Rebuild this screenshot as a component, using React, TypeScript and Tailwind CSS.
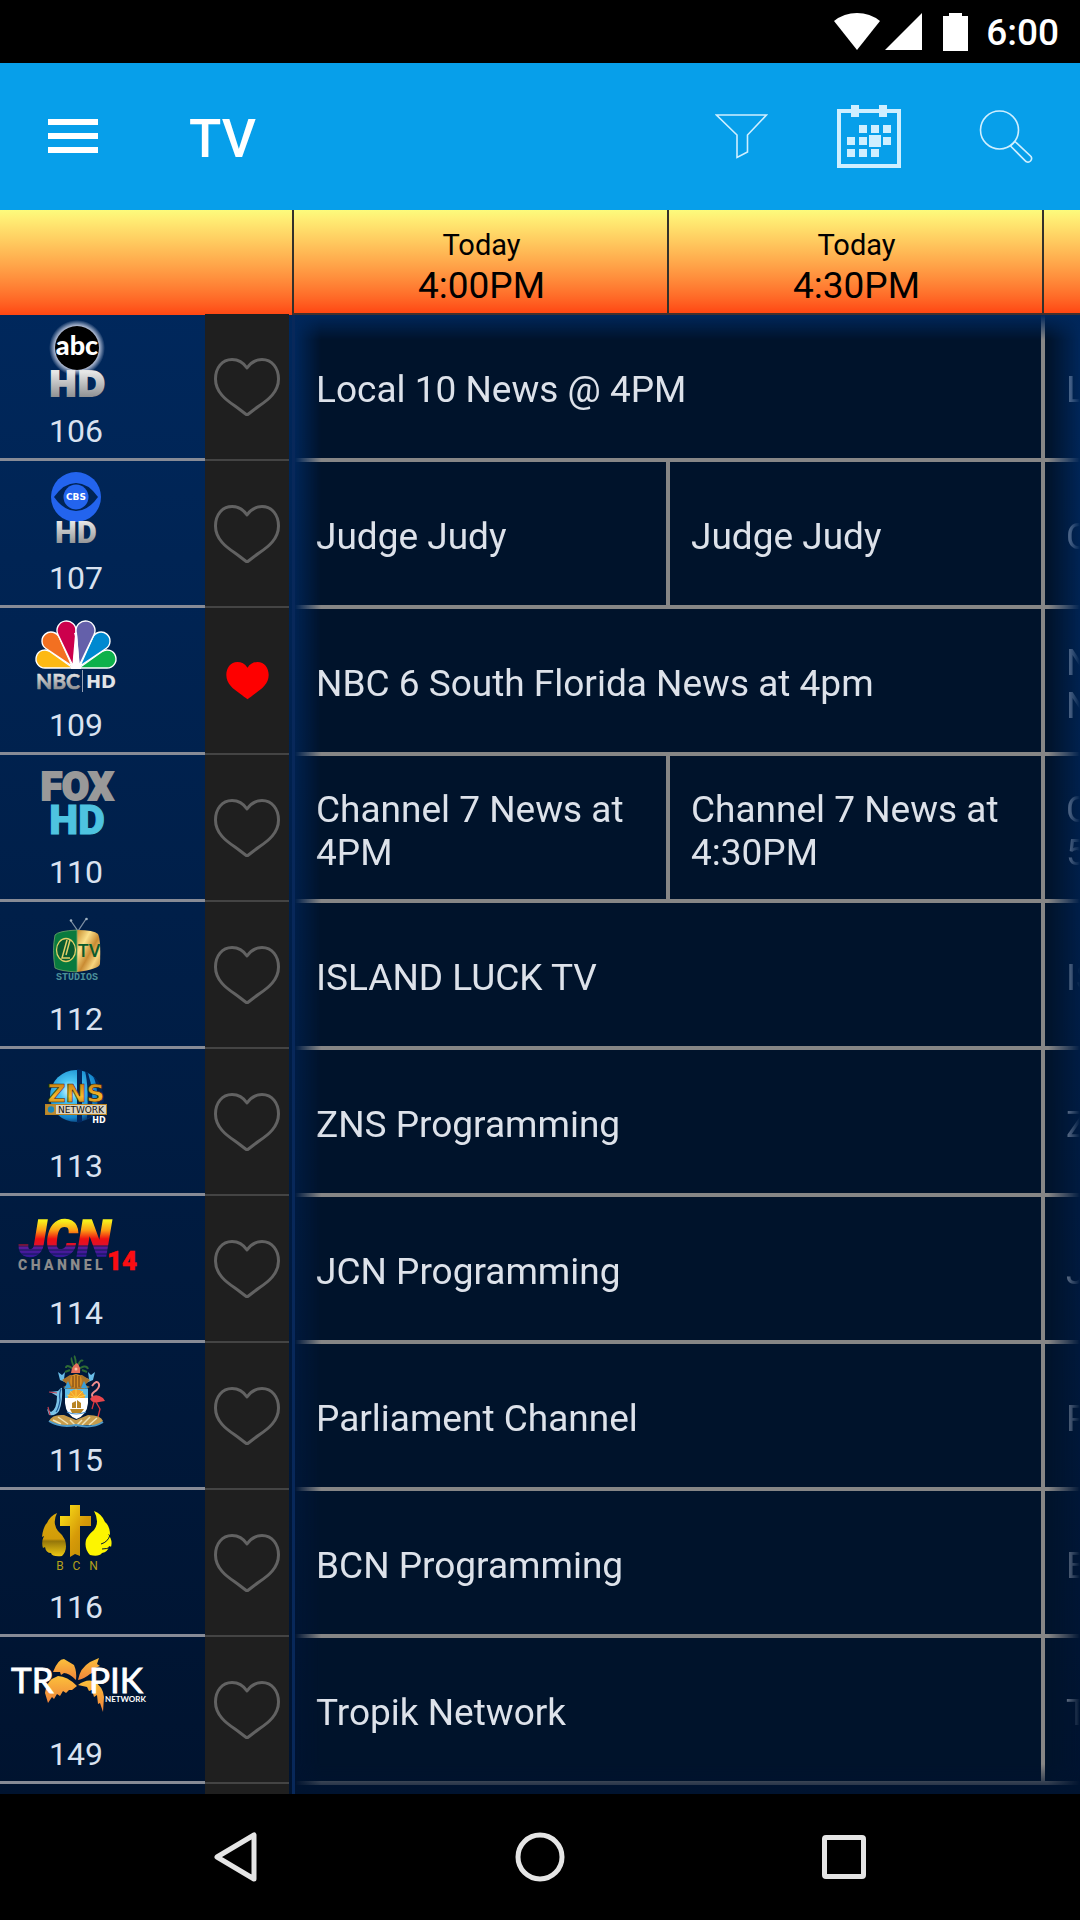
import { useState } from "react";
import type { ReactNode } from "react";

type Programme = { title: string; slots: 1 | 2 };
type Channel = {
  number: number;
  name: string;
  logo: ReactNode;
  favourite?: boolean;
  programmes: Programme[];
};

/* ---------- Channel logos, all on a 152 x 96 artboard ---------- */

function LogoBoard({ children }: { children: ReactNode }) {
  return (
    <svg viewBox="0 0 152 96" className="h-24 w-[152px]" aria-hidden="true">
      {children}
    </svg>
  );
}

function AbcLogo() {
  return (
    <LogoBoard>
      <defs>
        <linearGradient id="silver" x1="0" y1="0" x2="0" y2="1">
          <stop offset="0.2" stopColor="#e6e6e6" />
          <stop offset="1" stopColor="#77797c" />
        </linearGradient>
        <radialGradient id="halo">
          <stop offset="0.76" stopColor="#c8d0e4" />
          <stop offset="1" stopColor="#c8d0e4" stopOpacity="0" />
        </radialGradient>
      </defs>
      <circle cx="77" cy="34" r="28" fill="url(#halo)" />
      <circle cx="77" cy="34" r="22" fill="#000" />
      <text x="77" y="41" textAnchor="middle" fontFamily="Lato" fontWeight="900" fontSize="27" fill="#fff">abc</text>
      <text x="77" y="82" textAnchor="middle" fontFamily="DejaVu Sans" fontWeight="700" fontSize="34" fill="url(#silver)" stroke="url(#silver)" strokeWidth="2">HD</text>
    </LogoBoard>
  );
}

function CbsLogo() {
  return (
    <LogoBoard>
      <circle cx="76" cy="36" r="25" fill="#2364ee" />
      <path d="M54 36Q64 22 76 22Q88 22 98 36Q88 50 76 50Q64 50 54 36Z" fill="#002456" />
      <circle cx="76" cy="36" r="12.5" fill="#2364ee" />
      <text x="76" y="39" textAnchor="middle" fontFamily="DejaVu Sans" fontWeight="700" fontSize="9" fill="#fff">CBS</text>
      <text x="76" y="82" textAnchor="middle" fontFamily="Roboto" fontWeight="900" fontSize="31" fill="url(#silver)">HD</text>
    </LogoBoard>
  );
}

const feathers = [
  { bx: 73, by: 60, cx: 45, cy: 51, r: 9, color: "#fdb913" },
  { bx: 79, by: 60, cx: 107, cy: 51, r: 9, color: "#0db14b" },
  { bx: 72, by: 58, cx: 51, cy: 33, r: 9, color: "#f37021" },
  { bx: 80, by: 58, cx: 101, cy: 33, r: 9, color: "#0089d0" },
  { bx: 73, by: 58, cx: 66.5, cy: 22.5, r: 9.5, color: "#cc004c" },
  { bx: 79, by: 58, cx: 85.5, cy: 22.5, r: 9.5, color: "#6460aa" },
];

function featherPath(bx: number, by: number, cx: number, cy: number, r: number) {
  const distance = Math.hypot(bx - cx, by - cy);
  const toBase = Math.atan2(by - cy, bx - cx);
  const spread = Math.acos(r / distance);
  const x1 = cx + r * Math.cos(toBase + spread);
  const y1 = cy + r * Math.sin(toBase + spread);
  const x2 = cx + r * Math.cos(toBase - spread);
  const y2 = cy + r * Math.sin(toBase - spread);
  return `M${bx} ${by}L${x1} ${y1}A${r} ${r} 0 1 1 ${x2} ${y2}Z`;
}

function NbcLogo() {
  return (
    <LogoBoard>
      <path d="M71 61L76 24L81 61Z" fill="#fff" />
      {feathers.map((f) => (
        <path key={f.color} d={featherPath(f.bx, f.by, f.cx, f.cy, f.r)} fill={f.color} stroke="#fff" strokeWidth="1.4" strokeLinejoin="round" />
      ))}
      <path d="M72.5 61L75.5 30L74 25L77 24.5L80 61Z" fill="#fff" />
      <text x="36" y="81" fontFamily="Lato" fontWeight="700" fontSize="21" fill="url(#silver)" stroke="url(#silver)" strokeWidth="0.6">NBC</text>
      <path d="M82.5 62V84" stroke="#9aa3b5" strokeWidth="1" />
      <text x="86" y="80" fontFamily="DejaVu Sans" fontWeight="700" fontSize="18" fill="#e2e4e8">HD</text>
    </LogoBoard>
  );
}

function FoxLogo() {
  return (
    <LogoBoard>
      <text x="77" y="45" textAnchor="middle" fontFamily="Roboto" fontWeight="900" fontSize="39" fill="#999" stroke="#999" strokeWidth="2">FOX</text>
      <text x="77" y="79" textAnchor="middle" fontFamily="Roboto" fontWeight="900" fontSize="41" fill="#4ec3e0" stroke="#4ec3e0" strokeWidth="1">HD</text>
    </LogoBoard>
  );
}

function IslandLuckLogo() {
  return (
    <LogoBoard>
      <defs>
        <linearGradient id="gold" x1="0" y1="0" x2="1" y2="1">
          <stop offset="0" stopColor="#c58a2c" />
          <stop offset="0.3" stopColor="#fbe08a" />
          <stop offset="0.55" stopColor="#c98b33" />
          <stop offset="0.75" stopColor="#f7d47e" />
          <stop offset="1" stopColor="#b87a28" />
        </linearGradient>
      </defs>
      <path d="M71 19L78 29L86 17" fill="none" stroke="#7d8fa3" strokeWidth="1.3" />
      <circle cx="71" cy="18.5" r="1.3" fill="#9fb0c0" />
      <circle cx="86.5" cy="17" r="1.3" fill="#9fb0c0" />
      <path d="M77 28Q94 28 98 32Q101 38 100 62Q99 67 77 70Z" fill="url(#gold)" />
      <path d="M77 28Q58 29 55 33Q52 48 55 66Q60 69 77 70Z" fill="#087a3e" stroke="#6ea56a" strokeWidth="0.8" />
      <ellipse cx="66" cy="48" rx="9.5" ry="11.5" fill="#0a5a2f" stroke="#e2cf68" strokeWidth="1.3" />
      <path d="M67 38L62 56H70M70 38L66 53" fill="none" stroke="#e2cf68" strokeWidth="1.5" />
      <text x="89" y="55" textAnchor="middle" fontFamily="Roboto" fontWeight="500" fontSize="18" fill="#0b5b2d">TV</text>
      <text x="77" y="78" textAnchor="middle" fontFamily="Liberation Mono" fontWeight="700" fontSize="10" fill="#4b9099">STUDIOS</text>
    </LogoBoard>
  );
}

function ZnsLogo() {
  return (
    <LogoBoard>
      <defs>
        <radialGradient id="globe" cx="0.38" cy="0.4" r="0.65">
          <stop offset="0" stopColor="#e4fbff" />
          <stop offset="0.3" stopColor="#4ac7f4" />
          <stop offset="0.8" stopColor="#1384cb" />
          <stop offset="1" stopColor="#0a3468" />
        </radialGradient>
        <linearGradient id="amber" x1="0" y1="0" x2="0" y2="1">
          <stop offset="0.2" stopColor="#d08a14" />
          <stop offset="0.6" stopColor="#f7b92b" />
          <stop offset="1" stopColor="#b87012" />
        </linearGradient>
      </defs>
      <circle cx="76" cy="47" r="26" fill="url(#globe)" />
      <path d="M77 20L82 21V73L77 74ZM85 22Q89 38 87 70L91 68Q95 44 88 24ZM93 27Q99 38 97 64L104 52Q104 36 93 27Z" fill="#00265e" />
      <text x="76" y="53" textAnchor="middle" fontFamily="DejaVu Sans" fontWeight="700" fontSize="25" fill="url(#amber)" stroke="#33200a" strokeWidth="0.6">ZNS</text>
      <rect x="45.5" y="55.5" width="61" height="10" fill="#dcd3be" stroke="#b98422" strokeWidth="1" />
      <rect x="46" y="56" width="10" height="9" fill="#bb8a32" />
      <circle cx="51" cy="60.5" r="3.2" fill="#1b86b8" />
      <text x="81" y="64" textAnchor="middle" fontFamily="DejaVu Sans" fontWeight="400" fontSize="9" fill="#111">NETWORK</text>
      <text x="99" y="74" textAnchor="middle" fontFamily="DejaVu Sans" fontWeight="700" fontSize="8" fill="#fff">HD</text>
    </LogoBoard>
  );
}

function JcnLogo() {
  return (
    <LogoBoard>
      <defs>
        <linearGradient id="sunset" gradientUnits="userSpaceOnUse" x1="0" y1="25" x2="0" y2="61">
          <stop offset="0" stopColor="#f7f01c" />
          <stop offset="0.25" stopColor="#fca014" />
          <stop offset="0.5" stopColor="#ee1012" />
          <stop offset="0.66" stopColor="#e0102a" />
          <stop offset="0.72" stopColor="#5b1c9a" />
          <stop offset="1" stopColor="#33179a" />
        </linearGradient>
      </defs>
      <text x="65" y="60" textAnchor="middle" fontFamily="Roboto" fontStyle="italic" fontWeight="900" fontSize="49" fill="url(#sunset)" stroke="url(#sunset)" strokeWidth="1.5">JCN</text>
      <path d="M17 50H110M17 54H108M17 58H108" stroke="#001a42" strokeWidth="0.8" />
      <text x="18" y="74" fontFamily="Roboto" fontWeight="900" fontSize="14" fill="#8b8b8b">C H A N N E L</text>
      <text x="107" y="74" fontFamily="Roboto" fontWeight="900" fontSize="26" fill="#fb0d12" stroke="#fb0d12" strokeWidth="0.6">14</text>
    </LogoBoard>
  );
}

function ParliamentLogo() {
  return (
    <LogoBoard>
      {/* Fronds and conch above the helmet */}
      <path d="M76 28Q66 20 66 25M76 28Q70 16 72 15M76 28Q76 14 74 13M76 28Q80 15 83 18M76 28Q86 20 88 26M70 27L65 29M82 27L87 29" fill="none" stroke="#2d6b35" strokeWidth="2" />
      <path d="M71 30Q72 22 77 20Q81 24 80 30Z" fill="#e56f5c" />
      <circle cx="76" cy="26" r="1.5" fill="#ffc1a8" />
      {/* Mantling */}
      <path d="M58 29L62 32L65 29L64 36L70 34L67 40L60 37ZM95 29L91 32L88 29L89 36L83 34L86 40L93 37Z" fill="#69bde8" />
      <path d="M62 37L70 32H82L90 37L85 42L90 44L82 47H70L63 44L68 42Z" fill="#a9742b" />
      <path d="M68 38L71 45L64 46ZM84 38L81 45L88 46Z" fill="#3c9fd6" />
      <ellipse cx="76" cy="38" rx="6" ry="7" fill="#d58b24" />
      <path d="M73 33V44M76 32V45M79 33V44" stroke="#6b3d13" strokeWidth="1" />
      {/* Shield */}
      <path d="M65 46H88V60Q87 72 76.5 76Q66 72 65 60Z" fill="#fff" />
      <path d="M65 46H88V55H65Z" fill="#5fbde8" />
      <path d="M68 55A8 8 0 0 1 85 55Z" fill="#f2a229" />
      <path d="M76 46V55M70 48L76 55L83 48M67 52L76 55L86 52" stroke="#ffd54a" strokeWidth="0.8" fill="none" />
      <path d="M70 66H84L81 70H72ZM72 65V60L76 58V65ZM77 65V57L81 60V65Z" fill="#b88524" />
      <path d="M67 69Q76 73 86 69" fill="none" stroke="#4a93cf" strokeWidth="1.2" />
      {/* Marlin */}
      <path d="M50 49L58 48Q62 44 62 45Q63 58 59 68Q56 73 49 72L47 66L51 69Q57 66 57 53L50 49Z" fill="#7cc4e8" />
      <path d="M61 46Q59 50 60 57Q59 65 56 69" fill="none" stroke="#1d5796" strokeWidth="1.2" />
      <path d="M49 49L57 50M48 64L50 72" stroke="#c14052" strokeWidth="1.2" />
      {/* Flamingo */}
      <path d="M92 43Q97 36 99 41Q100 45 94 49Q90 52 94 55" fill="none" stroke="#f08e8e" strokeWidth="2" />
      <path d="M90 56Q95 49 103 55L105 58L99 59Q93 61 90 56Z" fill="#e8464c" />
      <path d="M96 59L100 66L98 74M94 59L92 66" fill="none" stroke="#d8343f" strokeWidth="1.3" />
      {/* Ground */}
      <path d="M49 78Q52 71 64 72L76 77L88 72Q101 72 103 78L98 82H56Z" fill="#c79c4b" />
      <path d="M53 77L61 81M58 74L68 81M90 74L82 82M97 75L89 82M70 77L76 83L82 77" fill="none" stroke="#efe2b4" strokeWidth="1.5" />
      <path d="M49 78Q60 85 76 82Q92 86 103 79" fill="none" stroke="#4e9ac9" strokeWidth="2" />
    </LogoBoard>
  );
}

function BcnLogo() {
  return (
    <LogoBoard>
      <defs>
        <linearGradient id="brass" x1="0" y1="0" x2="1" y2="1">
          <stop offset="0" stopColor="#ffe81a" />
          <stop offset="0.55" stopColor="#d69a08" />
          <stop offset="1" stopColor="#b98a05" />
        </linearGradient>
        <linearGradient id="wing" x1="0" y1="0" x2="0" y2="1">
          <stop offset="0" stopColor="#d9a80c" />
          <stop offset="0.6" stopColor="#d29b08" />
          <stop offset="0.65" stopColor="#94760a" />
          <stop offset="1" stopColor="#efc812" />
        </linearGradient>
      </defs>
      <path d="M70 15H80V26H91V36H80V66L75 64L70 67V36H60V26H70Z" fill="url(#brass)" />
      <path d="M57 23Q50 26 47 33Q43 37 42 47L44 46Q41 52 43 58L45 57Q46 63 51 63Q52 67 62 66Q68 60 65 50Q63 45 58 41Q52 33 57 23Z" fill="url(#wing)" />
      <path d="M94 21Q102 24 105 32Q110 36 110 45L108 44Q113 50 111 57L109 56Q108 62 102 63Q99 67 90 65Q84 59 86 50Q88 45 94 40Q100 32 94 21Z" fill="#fdf500" />
      <path d="M110 45Q108 52 101 54M111 57Q107 59 102 59" fill="none" stroke="#00153a" strokeWidth="1" />
      <text x="77" y="80" textAnchor="middle" fontFamily="Roboto" fontWeight="400" fontSize="12" fill="#b5a01a">{"B\u00a0\u00a0\u00a0C\u00a0\u00a0\u00a0N"}</text>
    </LogoBoard>
  );
}

function TropikLogo() {
  return (
    <LogoBoard>
      <defs>
        <linearGradient id="palm" x1="0" y1="0" x2="0" y2="1">
          <stop offset="0" stopColor="#fbc03b" />
          <stop offset="1" stopColor="#f0823a" />
        </linearGradient>
      </defs>
      <path d="M53 35Q58 22 64 22L74 28Q77 35 76 43Q69 36 64 36L61 38L60 35Z" fill="url(#palm)" />
      <path d="M78 43Q80 31 90 25L99 21L97 27L100 29L95 31L97 34L90 37Q84 42 78 43Z" fill="url(#palm)" />
      <path d="M77 49Q67 39 58 39Q46 43 45 56L48 66L52 60L54 62L57 57L60 59L63 54L66 56L69 53L72 53Z" fill="url(#palm)" />
      <path d="M78 48Q86 42 93 44Q103 49 104 60L103 75L100 66L98 67L97 58L94 60L92 53L89 54L87 50Z" fill="url(#palm)" />
      <text x="11" y="56" fontFamily="Lato" fontWeight="400" fontSize="35" fill="#fff" stroke="#fff" strokeWidth="0.8">TR</text>
      <text x="89" y="56" fontFamily="Lato" fontWeight="400" fontSize="35" fill="#fff" stroke="#fff" strokeWidth="0.8">PIK</text>
      <text x="105" y="65" fontFamily="Lato" fontWeight="700" fontSize="8" fill="#fff">NETWORK</text>
    </LogoBoard>
  );
}

/* ---------- Guide data ---------- */

const timeSlots = ["4:00PM", "4:30PM", "5:00PM"];

const channels: Channel[] = [
  { number: 106, name: "abc HD", logo: <AbcLogo />, programmes: [{ title: "Local 10 News @ 4PM", slots: 2 }, { title: "Local 10 News @ 5PM", slots: 2 }] },
  { number: 107, name: "CBS HD", logo: <CbsLogo />, programmes: [{ title: "Judge Judy", slots: 1 }, { title: "Judge Judy", slots: 1 }, { title: "CBS4 News at 5pm", slots: 2 }] },
  { number: 109, name: "NBC HD", logo: <NbcLogo />, favourite: true, programmes: [{ title: "NBC 6 South Florida News at 4pm", slots: 2 }, { title: "NBC 6 South Florida News at 5pm", slots: 1 }] },
  { number: 110, name: "FOX HD", logo: <FoxLogo />, programmes: [{ title: "Channel 7 News at 4PM", slots: 1 }, { title: "Channel 7 News at 4:30PM", slots: 1 }, { title: "Channel 7 News at 5PM", slots: 1 }] },
  { number: 112, name: "Island Luck TV", logo: <IslandLuckLogo />, programmes: [{ title: "ISLAND LUCK TV", slots: 2 }, { title: "ISLAND LUCK TV", slots: 2 }] },
  { number: 113, name: "ZNS Network HD", logo: <ZnsLogo />, programmes: [{ title: "ZNS Programming", slots: 2 }, { title: "ZNS Programming", slots: 2 }] },
  { number: 114, name: "JCN Channel 14", logo: <JcnLogo />, programmes: [{ title: "JCN Programming", slots: 2 }, { title: "JCN Programming", slots: 2 }] },
  { number: 115, name: "Parliament Channel", logo: <ParliamentLogo />, programmes: [{ title: "Parliament Channel", slots: 2 }, { title: "Parliament Channel", slots: 2 }] },
  { number: 116, name: "BCN", logo: <BcnLogo />, programmes: [{ title: "BCN Programming", slots: 2 }, { title: "BCN Programming", slots: 2 }] },
  { number: 149, name: "Tropik Network", logo: <TropikLogo />, programmes: [{ title: "Tropik Network", slots: 2 }, { title: "Tropik Network", slots: 2 }] },
];

/* ---------- Bars ---------- */

function StatusBar() {
  return (
    <div className="flex h-[63px] shrink-0 items-center justify-end bg-black pr-[21px] text-white">
      <svg viewBox="0 0 46 37" className="h-[37px] w-[46px]" fill="currentColor" aria-hidden="true">
        <path d="M23 37L0 8Q10 0 23 0Q36 0 46 8Z" />
      </svg>
      <svg viewBox="0 0 37 37" className="ml-[5px] h-[37px] w-[37px]" fill="currentColor" aria-hidden="true">
        <path d="M37 0V37H0Z" />
      </svg>
      <svg viewBox="0 0 25 38" className="ml-[21px] h-[38px] w-[25px]" fill="currentColor" aria-hidden="true">
        <path d="M6 0H19V3H25V38H0V3H6Z" />
      </svg>
      <time className="ml-[18px] pt-[3px] text-[37px] leading-[40px] font-medium">6:00</time>
    </div>
  );
}

function AppBar() {
  return (
    <header className="flex h-[147px] shrink-0 items-center bg-[#079fea] pl-12 text-white">
      <button type="button" aria-label="Open menu" className="h-12 w-[50px]">
        <svg viewBox="0 0 50 48" className="h-12 w-[50px]" fill="currentColor" aria-hidden="true">
          <path d="M0 6H50V12H0ZM0 20H50V26H0ZM0 34H50V40H0Z" />
        </svg>
      </button>
      <h1 className="ml-[91px] pt-1 text-[53px] leading-[60px] font-medium">TV</h1>
      <div className="ml-auto flex items-center pr-[47px] text-[#cfefff]">
        <button type="button" aria-label="Filter" className="h-[46px] w-[53px]">
          <svg viewBox="0 0 53 46" className="h-[46px] w-[53px]" fill="none" stroke="currentColor" strokeWidth="1.6" aria-hidden="true">
            <path d="M1.5 1H51.5L32.5 21V38L22 43.5V21Z" />
          </svg>
        </button>
        <button type="button" aria-label="Choose day" className="ml-[69px] size-16">
          <svg viewBox="0 0 64 64" className="size-16" fill="currentColor" aria-hidden="true">
            <path fillRule="evenodd" d="M0 4H64V63H0ZM4 8V59H60V8Z" />
            <path d="M14 0H22V12H14ZM42 0H50V12H42Z" />
            <path d="M22 20H30V28H22ZM34 20H42V28H34ZM46 20H54V28H46ZM10 32H18V40H10ZM22 32H30V40H22ZM32 30H44V42H32ZM46 32H54V40H46ZM10 44H18V52H10ZM22 44H30V52H22ZM34 44H42V52H34Z" />
          </svg>
        </button>
        <button type="button" aria-label="Search" className="ml-[78px] h-[54px] w-[54px]">
          <svg viewBox="0 0 54 54" className="h-[54px] w-[54px]" fill="none" stroke="currentColor" strokeWidth="1.6" aria-hidden="true">
            <circle cx="20.5" cy="20" r="19" />
            <path d="M31.5 36L47 51.5Q49.5 53 51.5 51Q53.5 49 52 46.5L36 31.5Z" />
          </svg>
        </button>
      </div>
    </header>
  );
}

function NavigationBar() {
  return (
    <nav aria-label="System" className="flex h-[126px] shrink-0 items-center justify-center gap-[254px] bg-black text-[#e5e5e5]">
      <button type="button" aria-label="Back" className="size-[50px]">
        <svg viewBox="0 0 50 50" className="size-[50px]" fill="none" stroke="currentColor" strokeWidth="5" strokeLinejoin="round" aria-hidden="true">
          <path d="M43 3V47L6 25Z" />
        </svg>
      </button>
      <button type="button" aria-label="Home" className="size-[50px]">
        <svg viewBox="0 0 50 50" className="size-[50px]" fill="none" stroke="currentColor" strokeWidth="5" aria-hidden="true">
          <circle cx="25" cy="25" r="22" />
        </svg>
      </button>
      <button type="button" aria-label="Recent apps" className="size-[50px]">
        <svg viewBox="0 0 50 50" className="size-[50px]" fill="none" stroke="currentColor" strokeWidth="5" aria-hidden="true">
          <rect x="5.5" y="5.5" width="39" height="39" rx="1.5" />
        </svg>
      </button>
    </nav>
  );
}

/* ---------- Guide ---------- */

const heartPath = "M33 10C29 4 24 1.5 18 1.5C8 1.5 1.5 10 1.5 21C1.5 34 12 42 21 48C26 51.5 30 55 33 57C36 55 40 51.5 45 48C54 42 64.5 34 64.5 21C64.5 10 58 1.5 48 1.5C42 1.5 37 4 33 10Z";

function FavouriteButton({ channel }: { channel: Channel }) {
  const [on, setOn] = useState(Boolean(channel.favourite));
  return (
    <button
      type="button"
      aria-pressed={on}
      aria-label={`Favourite ${channel.name}`}
      onClick={() => setOn(!on)}
      className="flex h-[147px] w-full items-center justify-center border-b-2 border-[#444444]"
    >
      {on ? (
        <svg viewBox="0 0 66 58" className="h-[39px] w-[45px]" fill="#fe0000" aria-hidden="true">
          <path d={heartPath} />
        </svg>
      ) : (
        <svg viewBox="0 0 66 58" className="h-[58px] w-[66px]" fill="none" stroke="#626262" strokeWidth="3" strokeLinejoin="round" aria-hidden="true">
          <path d={heartPath} />
        </svg>
      )}
    </button>
  );
}

function ChannelRail() {
  return (
    <div className="flex w-[292px] shrink-0 flex-col">
      <div className="h-[105px] shrink-0 bg-linear-to-b from-[#fcfb7c] to-[#ff4612]" />
      <div className="-mt-px flex grow">
        <ul className="w-[205px]">
          {channels.map((channel) => (
            <li key={channel.number} aria-label={channel.name} className="h-[147px] border-b-[3px] border-[#878b96]">
              <div className="w-[152px] text-center">
                {channel.logo}
                <p className="text-[32px] leading-[42px] text-[#d9e2f0]">{channel.number}</p>
              </div>
            </li>
          ))}
        </ul>
        <ul className="w-[84px] bg-[#1f1f1f]">
          {channels.map((channel) => (
            <li key={channel.number}>
              <FavouriteButton channel={channel} />
            </li>
          ))}
        </ul>
      </div>
    </div>
  );
}

function Timeline() {
  return (
    <div className="flex min-w-0 grow flex-col overflow-hidden">
      <ol className="flex h-[105px] shrink-0 border-b-2 border-[#40302e] bg-linear-to-b from-[#fcfb7c] to-[#ff4612] text-center text-black">
        {timeSlots.map((slot) => (
          <li key={slot} className="w-[375px] shrink-0 border-l-2 border-[#33302a] pt-4 pl-0.5">
            <p className="text-[29px] leading-[38px]">Today</p>
            <p className="text-[37px] leading-[44px]">{slot}</p>
          </li>
        ))}
      </ol>
      <div className="grow border-l-3 border-[#08285a]">
        <ul className="h-full [mask-image:linear-gradient(to_right,transparent_0,black_26px,black_calc(100%-32px),transparent_100%),linear-gradient(to_bottom,transparent_0,black_25px,black_calc(100%-30px),transparent_100%)] [mask-composite:intersect]">
          {channels.map((channel) => (
            <li key={channel.number} className="flex h-[147px]">
              {channel.programmes.map((programme, index) => (
                <button
                  key={index}
                  type="button"
                  className={`${programme.slots === 2 ? "w-[750px]" : "w-[375px]"} flex shrink-0 items-center border-r-4 border-b-4 border-[#868686] bg-[#00132b] pt-[6px] pr-2 pl-[21px] text-left text-[37px] leading-[43px] text-[#dde2ea]`}
                >
                  {programme.title}
                </button>
              ))}
            </li>
          ))}
        </ul>
      </div>
    </div>
  );
}

export default function App() {
  return (
    <div className="flex min-h-screen flex-col overflow-hidden bg-black font-['Roboto',sans-serif]">
      <StatusBar />
      <AppBar />
      <main className="flex grow bg-linear-to-b from-[#00295f] to-[#00132f]">
        <ChannelRail />
        <Timeline />
      </main>
      <NavigationBar />
    </div>
  );
}
